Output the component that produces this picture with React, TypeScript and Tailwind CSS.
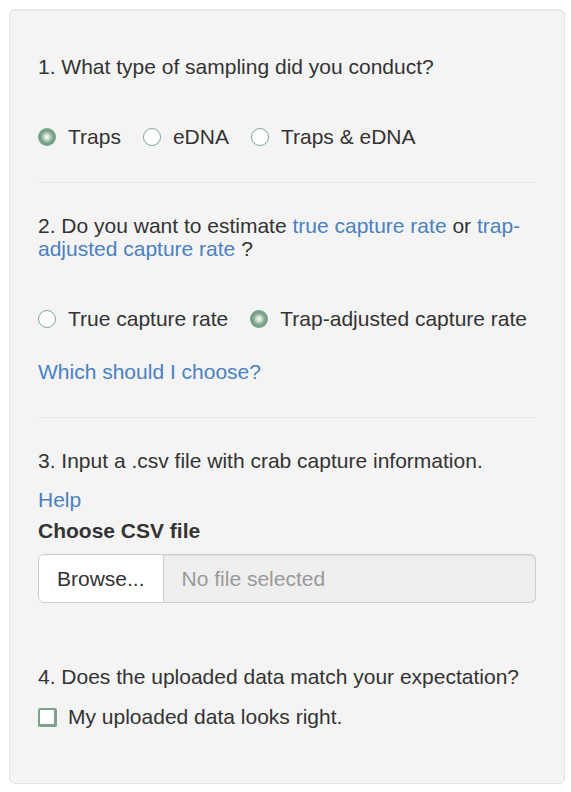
import React from "react";

function Radio({ checked, label }: { checked?: boolean; label: string }) {
  return (
    <div className="flex items-center gap-[12px]">
      {checked ? (
        <span className="block w-[18px] h-[18px] rounded-full bg-[radial-gradient(circle,#ffffff_0%,#d4e3d9_18%,#7aa189_48%,#76a086_100%)]" />
      ) : (
        <span className="block w-[18px] h-[18px] rounded-full border border-[#7fa890] bg-white" />
      )}
      <span>{label}</span>
    </div>
  );
}

export default function App() {
  return (
    <div
      className="min-h-[792px] bg-white pt-[9px] pl-[9px] text-[#333333]"
      style={{ fontFamily: '"Liberation Sans", Arial, sans-serif' }}
    >
      <div className="w-[556px] h-[775px] rounded-[6px] border border-[#e3e3e3] bg-[#f4f4f4] shadow-[inset_0_1px_1px_rgba(0,0,0,0.05)] pt-[45px] pl-[28px] pr-[28px] text-[21px]">
        <div className="leading-[23px]">1. What type of sampling did you conduct?</div>

        <div className="mt-[44px] flex items-center gap-[22px] leading-[30px]">
          <Radio checked label="Traps" />
          <Radio label="eDNA" />
          <Radio label="Traps & eDNA" />
        </div>

        <div className="mt-[30px] border-t border-[#e8e8e8]" />

        <div className="mt-[31px] leading-[23px]">
          2. Do you want to estimate <span className="text-[#4a81c0]">true capture rate</span> or{" "}
          <span className="text-[#4a81c0]">trap-adjusted capture rate</span> ?
        </div>

        <div className="mt-[44px] flex items-center gap-[22px] leading-[30px]">
          <Radio label="True capture rate" />
          <Radio checked label="Trap-adjusted capture rate" />
        </div>

        <div className="mt-[23px] leading-[30px] text-[#4a81c0]">Which should I choose?</div>

        <div className="mt-[30px] border-t border-[#e8e8e8]" />

        <div className="mt-[31px] leading-[23px]">3. Input a .csv file with crab capture information.</div>

        <div className="mt-[13px] leading-[30px] text-[#4a81c0]">Help</div>
        <div className="mt-[1px] leading-[30px] font-bold">Choose CSV file</div>

        <div className="mt-[8px] flex h-[49px]">
          <div className="flex items-center rounded-l-[6px] border border-[#cccccc] bg-white px-[18px]">
            Browse...
          </div>
          <div className="flex flex-1 items-center rounded-r-[6px] border border-l-0 border-[#cccccc] bg-[#eeeeee] px-[18px] text-[#999999] shadow-[inset_0_1px_1px_rgba(0,0,0,0.075)]">
            No file selected
          </div>
        </div>

        <div className="mt-[62px] leading-[23px]">4. Does the uploaded data match your expectation?</div>

        <div className="mt-[14px] flex items-center gap-[11px] leading-[30px]">
          <span className="block w-[19px] h-[19px] rounded-[2px] border-2 border-[#7aa58a] bg-white shadow-[inset_-1px_-1px_1px_rgba(0,0,0,0.45)]" />
          <span>My uploaded data looks right.</span>
        </div>
      </div>
    </div>
  );
}
